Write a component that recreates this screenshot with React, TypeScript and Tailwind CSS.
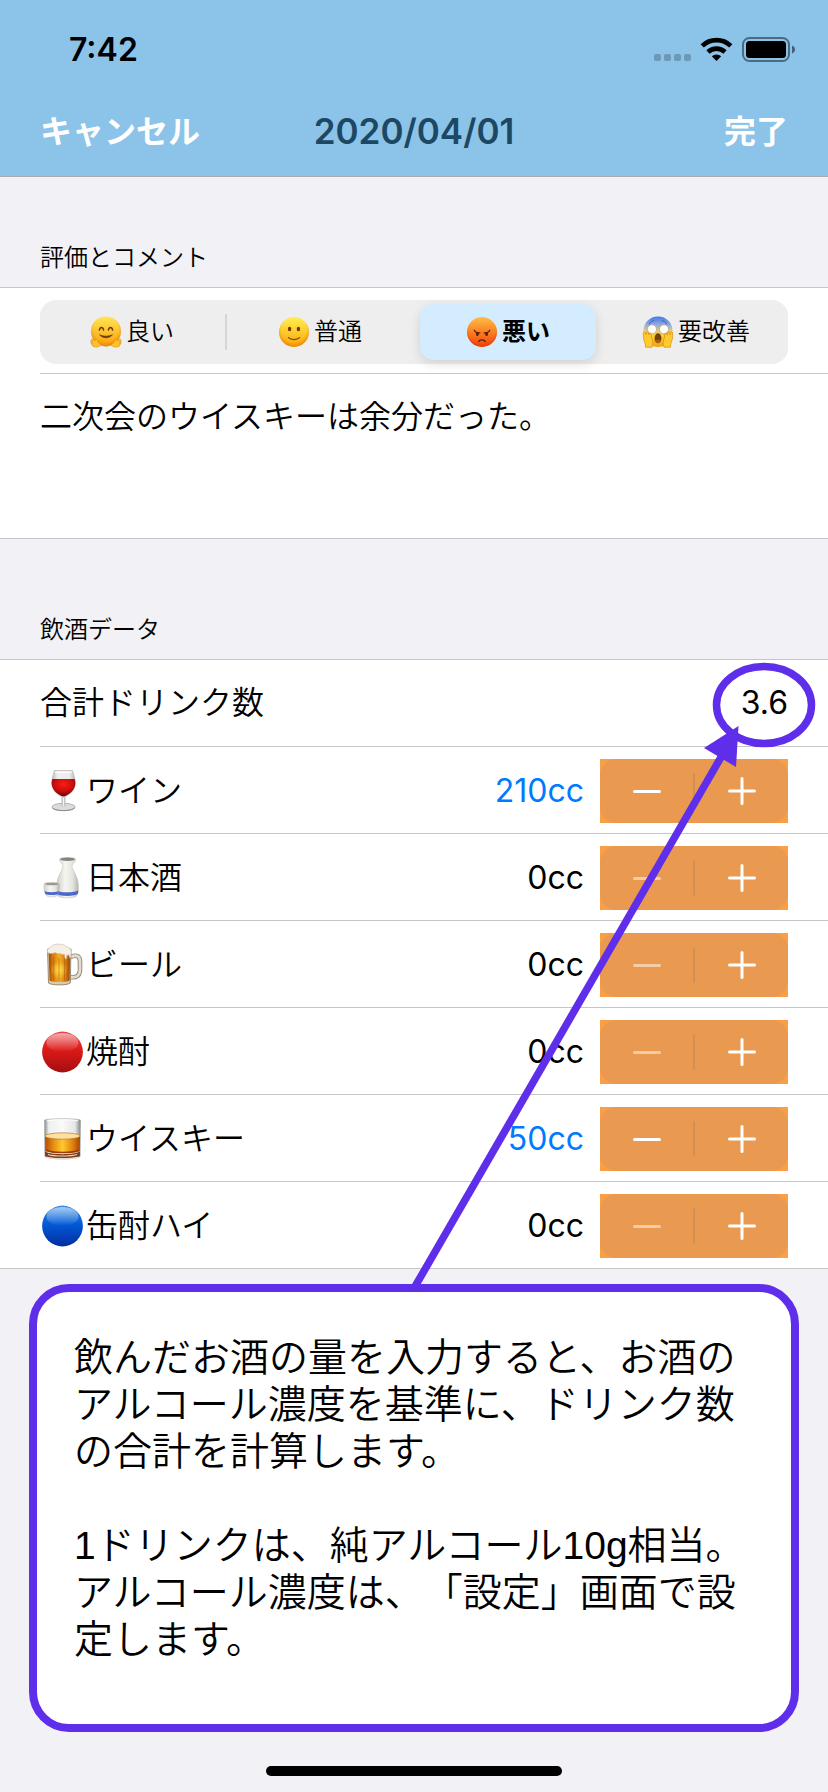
import { useState } from "react";
import type { ReactNode } from "react";

type IconProps = { className?: string };

function FaceGradients({ id, from, to }: { id: string; from: string; to: string }) {
  return (
    <defs>
      <linearGradient id={id} x1="0" y1="0" x2="0" y2="1">
        <stop offset="0" stopColor={from} />
        <stop offset="1" stopColor={to} />
      </linearGradient>
      <radialGradient id={`${id}-edge`} cx="0.5" cy="0.42" r="0.6">
        <stop offset="0.7" stopColor="#e06a00" stopOpacity="0" />
        <stop offset="1" stopColor="#e06a00" stopOpacity="0.6" />
      </radialGradient>
    </defs>
  );
}

function HuggingFace({ className }: IconProps) {
  return (
    <svg viewBox="0 0 32 32" className={className} aria-hidden="true">
      <FaceGradients id="hug" from="#ffe552" to="#fb9f0c" />
      <circle cx="16" cy="15.4" r="15" fill="url(#hug)" />
      <circle cx="16" cy="15.4" r="15" fill="url(#hug-edge)" />
      <path d="M9.4 14c.7-3.200 3.500-3.200 4.200 0M18.400 14c.7-3.200 3.500-3.200 4.200 0" fill="none" stroke="#6b3a06" strokeWidth="1.500" strokeLinecap="round" />
      <path d="M9.600 18.800c3.200 3.900 9.600 3.900 12.800 0-3.600 1.900-9.200 1.900-12.800 0z" fill="#6b3a06" stroke="#6b3a06" strokeWidth="0.700" strokeLinejoin="round" />
      <g fill="#ffc42e" stroke="#e58a0a" strokeWidth="0.600" strokeLinejoin="round">
        <path d="M10.200 29.600c-1.400 2-5.600 1.700-7.200.8-.9-.5-.5-1.400.4-1.200-1.400-.4-2.600-1-2.400-1.800.2-.6 1-.4 1.800-.1C1.600 26.700.3 26 .5 25.200c.2-.7 1.200-.3 2.200.2-.9-.8-1.600-1.600-1.200-2.200.5-.6 1.700.4 3.400 1.800.4-.9.6-2 1.500-1.800 1 .3.700 1.800 1.500 3 .8 1 3.200 1.800 2.300 3.400z" />
        <path d="M21.800 29.600c1.400 2 5.600 1.700 7.200.8.900-.5.5-1.400-.4-1.200 1.400-.4 2.600-1 2.400-1.800-.2-.6-1-.4-1.800-.1 1.200-.6 2.500-1.300 2.300-2.100-.2-.7-1.200-.3-2.200.2.900-.8 1.600-1.600 1.200-2.200-.5-.6-1.700.4-3.400 1.800-.4-.9-.6-2-1.500-1.800-1 .3-.7 1.800-1.500 3-.8 1-3.200 1.800-2.300 3.400z" />
      </g>
    </svg>
  );
}

function SmilingFace({ className }: IconProps) {
  return (
    <svg viewBox="0 0 32 32" className={className} aria-hidden="true">
      <FaceGradients id="smile" from="#ffee50" to="#fba50a" />
      <circle cx="16" cy="16" r="15" fill="url(#smile)" />
      <circle cx="16" cy="16" r="15" fill="url(#smile-edge)" />
      <ellipse cx="11.600" cy="13" rx="1.700" ry="2.300" fill="#6b3a06" />
      <ellipse cx="20.400" cy="13" rx="1.700" ry="2.300" fill="#6b3a06" />
      <path d="M10.400 21.600c3 2.600 8.200 2.600 11.200 0" fill="none" stroke="#7a4408" strokeWidth="1.200" strokeLinecap="round" />
    </svg>
  );
}

function PoutingFace({ className }: IconProps) {
  return (
    <svg viewBox="0 0 32 32" className={className} aria-hidden="true">
      <defs>
        <linearGradient id="pout" x1="0" y1="0" x2="0" y2="1">
          <stop offset="0" stopColor="#ffbe48" />
          <stop offset="0.5" stopColor="#fb8022" />
          <stop offset="1" stopColor="#f0420d" />
        </linearGradient>
        <radialGradient id="pout-edge" cx="0.5" cy="0.42" r="0.6">
          <stop offset="0.75" stopColor="#e23b00" stopOpacity="0" />
          <stop offset="1" stopColor="#e23b00" stopOpacity="0.7" />
        </radialGradient>
      </defs>
      <circle cx="16" cy="16" r="15" fill="url(#pout)" />
      <circle cx="16" cy="16" r="15" fill="url(#pout-edge)" />
      <path d="M8.200 14.200c1 1.900 3.500 2.900 5.700 2.600M23.800 14.200c-1 1.900-3.500 2.900-5.700 2.600" fill="none" stroke="#5b1e05" strokeWidth="1.200" strokeLinecap="round" />
      <ellipse cx="11.400" cy="18" rx="1.500" ry="2" fill="#5b1e05" />
      <ellipse cx="20.600" cy="18" rx="1.500" ry="2" fill="#5b1e05" />
      <path d="M12.800 25.400c1.300-2.100 5.100-2.100 6.400 0" fill="none" stroke="#5b1e05" strokeWidth="1.400" strokeLinecap="round" />
    </svg>
  );
}

function ScreamingFace({ className }: IconProps) {
  return (
    <svg viewBox="0 0 32 32" className={className} aria-hidden="true">
      <defs>
        <linearGradient id="scream" x1="0" y1="0" x2="0" y2="1">
          <stop offset="0" stopColor="#3f7af0" />
          <stop offset="0.3" stopColor="#9fb0d8" />
          <stop offset="0.5" stopColor="#f0cf60" />
          <stop offset="0.7" stopColor="#ffc928" />
          <stop offset="1" stopColor="#f3a010" />
        </linearGradient>
      </defs>
      <path d="M16 .6C7.600.6 1.500 6.800 1.500 15c0 6.500 3.500 16 14.500 16s14.500-9.500 14.500-16C30.500 6.800 24.400.6 16 .6z" fill="url(#scream)" />
      <path d="M7.300 8c1-2 2.700-3 4.500-3.200M24.700 8c-1-2-2.700-3-4.500-3.200" fill="none" stroke="#3b5dac" strokeWidth="1" strokeLinecap="round" />
      <circle cx="10" cy="13.300" r="4.500" fill="#fff" stroke="#a99a70" strokeWidth="0.600" />
      <circle cx="22" cy="13.300" r="4.500" fill="#fff" stroke="#a99a70" strokeWidth="0.600" />
      <ellipse cx="16" cy="22.300" rx="3.400" ry="5" fill="#75400c" />
      <path d="M13.500 24.600c1.400-1.600 3.600-1.600 5 0-.6 1.600-1.500 2.600-2.500 2.600s-1.900-1-2.500-2.600z" fill="#a85d18" />
      <g fill="#ffcb2c" stroke="#d68a0c" strokeWidth="0.700" strokeLinejoin="round">
        <path d="M3.600 31.200c.2-3.400-1.700-5.800-2.100-9.400-.3-2.600-.6-5.800.6-6 1-.2 1.500 1.400 2 3 .1-2 .6-3.200 1.500-3.100.9.100 1 1.600 1.200 3.300.4-1.500 1-2.300 1.800-2 .8.300.5 2.500.9 4.300 1.200 2.800 2.200 6 .4 9.900z" />
        <path d="M28.400 31.200c-.2-3.400 1.700-5.800 2.100-9.400.3-2.600.6-5.800-.6-6-1-.2-1.500 1.400-2 3-.1-2-.6-3.200-1.500-3.100-.9.100-1 1.600-1.200 3.300-.4-1.500-1-2.300-1.800-2-.8.300-.5 2.500-.9 4.300-1.200 2.800-2.200 6-.4 9.900z" />
      </g>
    </svg>
  );
}

function WineIcon({ className }: IconProps) {
  return (
    <svg viewBox="0 0 44 44" className={className} aria-hidden="true">
      <defs>
        <linearGradient id="wine-bowl" x1="0" y1="0" x2="1" y2="0">
          <stop offset="0" stopColor="#b8b8b8" />
          <stop offset="0.25" stopColor="#f0f0f0" />
          <stop offset="0.75" stopColor="#ececec" />
          <stop offset="1" stopColor="#b4b4b4" />
        </linearGradient>
        <radialGradient id="wine-red" cx="0.5" cy="0.3" r="0.65">
          <stop offset="0" stopColor="#f51f17" />
          <stop offset="0.6" stopColor="#cf0d0b" />
          <stop offset="1" stopColor="#6d0a0a" />
        </radialGradient>
      </defs>
      <ellipse cx="23.500" cy="38" rx="11.600" ry="3.700" fill="#dcdcdc" stroke="#a2a2a2" strokeWidth="0.800" />
      <path d="M12.500 39c2.500 3.400 19.500 3.400 22 0" fill="none" stroke="#8c8c8c" strokeWidth="1" />
      <path d="M21.600 26h3.800l.4 10.500c.4 1.200-5 1.200-4.600 0z" fill="#c6c6c6" />
      <path d="M23 27h1v10h-1z" fill="#f6f6f6" />
      <path d="M14.500 1.500h18c1.800 5.500 3.200 10.500 2.800 14-.7 6-6.800 11.500-11.800 12.500-5-1-11.100-6.500-11.800-12.500-.4-3.500 1-8.500 2.800-14z" fill="url(#wine-bowl)" stroke="#bdbdbd" strokeWidth="0.800" />
      <path d="M12.400 10h22.200c.6 2 .8 4 .6 5.500-.7 6-6.700 11-11.700 12-5-1-11-6-11.700-12-.2-1.500 0-3.500.6-5.500z" fill="url(#wine-red)" />
      <path d="M15 3.300h17" stroke="#fff" strokeWidth="1" />
    </svg>
  );
}

function SakeIcon({ className }: IconProps) {
  return (
    <svg viewBox="0 0 44 44" className={className} aria-hidden="true">
      <defs>
        <linearGradient id="sake-body" x1="0" y1="0" x2="1" y2="0">
          <stop offset="0" stopColor="#cfcfca" />
          <stop offset="0.4" stopColor="#f5f5f1" />
          <stop offset="0.75" stopColor="#e4e4df" />
          <stop offset="1" stopColor="#b4b4ae" />
        </linearGradient>
      </defs>
      <path d="M19.500 3c0-2 16-2 16 0 .4 2.600-3.800 5-3.500 7.500.4 3.500 5.600 9 6.300 18 .4 5.500-.6 10.500-2.300 12-2.500 1.700-15 1.700-17.500 0-1.700-1.500-2.200-6.500-1.800-12 .7-9 5.900-14.500 6.300-18C23.300 8 19.100 5.600 19.500 3z" fill="url(#sake-body)" stroke="#c2c2bc" strokeWidth="0.600" />
      <ellipse cx="27.500" cy="3.300" rx="7.200" ry="1.700" fill="#85857d" />
      <path d="M16.700 34.500c4 2.500 18 2.500 21.700-.2l-.4 3.500c-3.500 2.700-17 2.700-21 .4z" fill="#4c67cb" />
      <path d="M4 28c0-2.200 15.500-2.200 15.500 0 .3 6-1 10.500-3 12-1.800 1.200-7.700 1.200-9.500 0-2-1.500-3.300-6-3-12z" fill="url(#sake-body)" stroke="#c2c2bc" strokeWidth="0.600" />
      <ellipse cx="11.800" cy="28" rx="6.700" ry="1.300" fill="#9a9a92" />
      <path d="M4.400 35c3 1.600 11.500 1.600 14.700 0l-.8 3c-3 1.400-10 1.400-13 0z" fill="#4c67cb" />
    </svg>
  );
}

function BeerIcon({ className }: IconProps) {
  return (
    <svg viewBox="0 0 44 44" className={className} aria-hidden="true">
      <defs>
        <linearGradient id="beer-fill" x1="0" y1="0" x2="1" y2="0">
          <stop offset="0" stopColor="#a04a04" />
          <stop offset="0.2" stopColor="#d67c0c" />
          <stop offset="0.5" stopColor="#f5b025" />
          <stop offset="0.8" stopColor="#d2780d" />
          <stop offset="1" stopColor="#984504" />
        </linearGradient>
        <radialGradient id="beer-glow" cx="0.5" cy="0.5" r="0.5">
          <stop offset="0" stopColor="#ffdf4a" />
          <stop offset="1" stopColor="#ffdf4a" stopOpacity="0" />
        </radialGradient>
      </defs>
      <path d="M30.500 14c6-2.500 9.500-1.500 9.500 5v7.500c0 6.500-4 8.500-9.500 7.500" fill="none" stroke="#8f8577" strokeWidth="4.600" />
      <path d="M30.500 14c6-2.500 9.500-1.500 9.500 5v7.500c0 6.500-4 8.500-9.500 7.500" fill="none" stroke="#e2dbd0" strokeWidth="2.800" />
      <path d="M7.500 6h23.500l-.7 34c-3 2.500-18.800 2.500-21.800 0z" fill="#d8cbb8" stroke="#8a7558" strokeWidth="0.800" />
      <path d="M8.600 7h21.600l-.6 30.800c-3 1.800-17 1.800-20 0z" fill="url(#beer-fill)" />
      <ellipse cx="19" cy="27" rx="8.500" ry="9" fill="url(#beer-glow)" />
      <path d="M13.800 14v23.500M19 15v23M24.500 14v23.500" stroke="#b05f0a" strokeWidth="0.900" opacity="0.650" />
      <path d="M7.300 9c-.6-2.700 1.200-3.800 3-4.600 2-2.700 5.700-3.900 8.700-3.100 3-.3 5.500.5 7 2.300 3.200.4 5.400 2.600 5.200 5.600l-.5 4.800c-.5 1.300-1.300.8-1.500-.6l-.4-2c-.4 1.200-1.300 1.300-1.900.5l-.3 3.300c-.5 1.200-1.500.8-1.700-.5l-.6-3.700c-1.800 1.300-2.900-.2-4.300-.5-1.900.7-3.300-.3-4.700-1-2.400 1.300-7 1.400-8-.5z" fill="#f5efe6" stroke="#c7b9a8" strokeWidth="0.600" />
    </svg>
  );
}

function WhiskyIcon({ className }: IconProps) {
  return (
    <svg viewBox="0 0 44 44" className={className} aria-hidden="true">
      <defs>
        <linearGradient id="glass" x1="0" y1="0" x2="1" y2="0">
          <stop offset="0" stopColor="#8a8a8a" />
          <stop offset="0.12" stopColor="#efefef" />
          <stop offset="0.5" stopColor="#fafafa" />
          <stop offset="0.85" stopColor="#e6e6e6" />
          <stop offset="1" stopColor="#868686" />
        </linearGradient>
        <linearGradient id="whisky" x1="0" y1="0" x2="1" y2="0">
          <stop offset="0" stopColor="#b64d06" />
          <stop offset="0.25" stopColor="#e88e12" />
          <stop offset="0.5" stopColor="#ffc92f" />
          <stop offset="0.8" stopColor="#df7f0f" />
          <stop offset="1" stopColor="#a54405" />
        </linearGradient>
      </defs>
      <path d="M4.500 3c5-1.700 31-1.700 36 0l-.4 36.500c-5 3.300-30.200 3.300-35.200 0z" fill="url(#glass)" stroke="#a0a0a0" strokeWidth="0.600" />
      <path d="M5 34.500c5 3.500 30 3.500 35 0l-.1 4.500c-5 3.300-29.800 3.300-34.800 0z" fill="#7f3c18" />
      <path d="M8 37.500c6 2 22 2 29 0M7 40.300c6 1.700 24 1.700 31 0" fill="none" stroke="#e4dad0" strokeWidth="1.200" />
      <path d="M5 19.500h35l-.3 14c-5 3.500-29.400 3.500-34.400 0z" fill="url(#whisky)" />
      <path d="M5.600 33c6 3.300 28 3.300 33.800 0" fill="none" stroke="#9c3c06" strokeWidth="1.500" />
      <ellipse cx="22.500" cy="19" rx="17.500" ry="3.200" fill="#fbe0a0" stroke="#b5651a" strokeWidth="0.600" />
      <path d="M7 3.800c6-1.200 25-1.200 31 0" fill="none" stroke="#fff" strokeWidth="1" />
    </svg>
  );
}

function BallIcon({ className, id, stops }: IconProps & { id: string; stops: [string, string, string] }) {
  return (
    <svg viewBox="0 0 44 44" className={className} aria-hidden="true">
      <defs>
        <linearGradient id={id} x1="0" y1="0" x2="0" y2="1">
          <stop offset="0" stopColor={stops[0]} />
          <stop offset="0.45" stopColor={stops[1]} />
          <stop offset="1" stopColor={stops[2]} />
        </linearGradient>
        <linearGradient id={`${id}-shine`} x1="0" y1="0" x2="0" y2="1">
          <stop offset="0" stopColor="#fff" stopOpacity="0.550" />
          <stop offset="1" stopColor="#fff" stopOpacity="0" />
        </linearGradient>
      </defs>
      <circle cx="22.500" cy="22" r="20.400" fill={`url(#${id})`} />
      <ellipse cx="22.500" cy="12.500" rx="16" ry="9.500" fill={`url(#${id}-shine)`} />
    </svg>
  );
}

function StatusIcons() {
  return (
    <svg viewBox="0 0 142 26" className="h-[26px] w-[142px]" role="img" aria-label="Wi-Fi・バッテリー">
      <g fill="#000" fillOpacity="0.220">
        <rect x="0" y="17" width="7" height="7" rx="2" />
        <rect x="10" y="17" width="7" height="7" rx="2" />
        <rect x="20" y="17" width="7" height="7" rx="2" />
        <rect x="30" y="17" width="7" height="7" rx="2" />
      </g>
      <g fill="none" stroke="#000" strokeWidth="4.600">
        <path d="M48.200 8.900a20.500 20.500 0 0 1 28.600 0" />
        <path d="M54 15a12.300 12.300 0 0 1 17 0" />
      </g>
      <path d="M62.500 24l-4.700-4.700a6.800 6.800 0 0 1 9.400 0z" />
      <rect x="89" y="1" width="46" height="23" rx="6.500" fill="none" stroke="#000" strokeOpacity="0.450" strokeWidth="2" />
      <rect x="92" y="4" width="40" height="17" rx="3.500" />
      <path d="M138 8.500c4 1.200 4 6.800 0 8z" fillOpacity="0.500" />
    </svg>
  );
}

const ratings = [
  { label: "良い", Icon: HuggingFace },
  { label: "普通", Icon: SmilingFace },
  { label: "悪い", Icon: PoutingFace },
  { label: "要改善", Icon: ScreamingFace },
];

function RatingControl() {
  const [selected, setSelected] = useState(2);
  return (
    <div role="radiogroup" aria-label="評価" className="flex h-16 rounded-2xl bg-[#eeeeee] p-1">
      {ratings.map(({ label, Icon }, i) => (
        <div key={label} className="contents">
          {i > 0 && (
            <span className="flex w-3 items-center justify-center">
              {i !== selected && i - 1 !== selected && <span className="h-9 w-0.5 rounded-full bg-[#d5d5d6]" />}
            </span>
          )}
          <label
            className={
              i === selected
                ? "relative flex flex-1 cursor-pointer items-center justify-center gap-1 rounded-[14px] bg-[#d4ecff] text-2xl font-bold shadow-[0_4px_12px_rgba(0,0,0,0.12)]"
                : "relative flex flex-1 cursor-pointer items-center justify-center gap-1 text-2xl"
            }
          >
            <input
              type="radio"
              name="rating"
              className="absolute inset-0 size-full cursor-pointer appearance-none"
              checked={i === selected}
              onChange={() => setSelected(i)}
            />
            <Icon className="size-8" />
            {label}
          </label>
        </div>
      ))}
    </div>
  );
}

function Stepper({ label, value, onChange }: { label: string; value: number; onChange: (v: number) => void }) {
  return (
    <div className="h-16 w-[188px] bg-[#fb9f46]">
      <div className="flex h-full items-center rounded-2xl bg-[#e99a50]">
        <button
          type="button"
          aria-label={`${label}を減らす`}
          disabled={value === 0}
          onClick={() => onChange(Math.max(0, value - 10))}
          className="flex h-full flex-1 items-center justify-center text-white disabled:text-white/50"
        >
          <svg viewBox="0 0 28 28" className="size-7" aria-hidden="true">
            <path d="M1.500 14.500h25" stroke="currentColor" strokeWidth="3" strokeLinecap="round" />
          </svg>
        </button>
        <span className="h-9 w-0.5 rounded-full bg-[#cf9157]" />
        <button
          type="button"
          aria-label={`${label}を増やす`}
          onClick={() => onChange(value + 10)}
          className="flex h-full flex-1 items-center justify-center text-white"
        >
          <svg viewBox="0 0 28 28" className="size-7" aria-hidden="true">
            <path d="M1.500 14h25M14 1.500v25" stroke="currentColor" strokeWidth="3" strokeLinecap="round" />
          </svg>
        </button>
      </div>
    </div>
  );
}

function SectionHeader({ children }: { children: ReactNode }) {
  return <h2 className="border-b border-[#c6c6c8] px-10 pb-[11px] text-2xl leading-9">{children}</h2>;
}

const drinks = [
  { name: "ワイン", icon: <WineIcon className="size-11" />, amount: 210 },
  { name: "日本酒", icon: <SakeIcon className="size-11" />, amount: 0 },
  { name: "ビール", icon: <BeerIcon className="size-11" />, amount: 0 },
  { name: "焼酎", icon: <BallIcon id="ball-red" stops={["#e8474a", "#dc1917", "#a30f12"]} className="size-11" />, amount: 0 },
  { name: "ウイスキー", icon: <WhiskyIcon className="size-11" />, amount: 50 },
  { name: "缶酎ハイ", icon: <BallIcon id="ball-blue" stops={["#3a8ee8", "#0259d6", "#022ea2"]} className="size-11" />, amount: 0 },
];

function PointerArrow() {
  return (
    <svg
      viewBox="0 0 424 630"
      className="pointer-events-none absolute top-0 right-0 z-10 h-[630px] w-[424px]"
      aria-hidden="true"
    >
      <ellipse cx="360" cy="45" rx="47.500" ry="38.500" fill="none" stroke="#5e2eea" strokeWidth="7.500" />
      <path d="M9 630L320 92" stroke="#5e2eea" strokeWidth="7.500" />
      <path d="M334.500 66L300 88L332 107z" fill="#5e2eea" />
    </svg>
  );
}

export default function App() {
  const [amounts, setAmounts] = useState(drinks.map((d) => d.amount));

  return (
    <div className="flex min-h-screen flex-col bg-[#f2f1f6] font-['Inter','Noto_Sans_CJK_JP',sans-serif] font-[350] text-black">
      <header className="border-b border-[#a9a9b4] bg-[#8cc3e9]">
        <div className="flex h-[88px] items-center justify-between pt-3 pr-8 pl-[69px]">
          <time className="text-[32px] font-semibold">7:42</time>
          <StatusIcons />
        </div>
        <nav className="grid h-[88px] grid-cols-[1fr_auto_1fr] items-center px-10">
          <button type="button" className="justify-self-start text-[32px] font-bold text-white">キャンセル</button>
          <h1 className="pb-0.5 text-[35px] font-semibold text-[#1d4863]">2020/04/01</h1>
          <button type="button" className="justify-self-end text-[32px] font-bold text-white">完了</button>
        </nav>
      </header>

      <main className="flex flex-1 flex-col">
        <section className="pt-[63px]">
          <SectionHeader>評価とコメント</SectionHeader>
          <div className="border-b border-[#c6c6c8] bg-white pl-10">
            <div className="border-b border-[#c6c6c8] pt-3 pr-10 pb-[9px]">
              <RatingControl />
            </div>
            <textarea
              aria-label="コメント"
              defaultValue="二次会のウイスキーは余分だった。"
              className="block h-[164px] w-full resize-none bg-transparent pt-5 pr-10 text-[32px] leading-[46px] outline-none"
            />
          </div>
        </section>

        <section className="pt-[73px]">
          <SectionHeader>飲酒データ</SectionHeader>
          <div className="relative border-b border-[#c6c6c8] bg-white pl-10">
            <div className="flex h-[86px] items-center justify-between pr-10 text-[32px]">
              <span>合計ドリンク数</span>
              <output className="font-normal">3.6</output>
            </div>
            <ul>
              {drinks.map((drink, i) => (
                <li key={drink.name} className="flex h-[87px] items-center border-t border-[#c6c6c8] pt-0.5 pr-10 text-[32px]">
                  {drink.icon}
                  <span className="ml-0.5 flex-1">{drink.name}</span>
                  <span className={amounts[i] > 0 ? "mr-4 font-normal text-[#007aff]" : "mr-4 font-normal"}>{amounts[i]}cc</span>
                  <Stepper
                    label={drink.name}
                    value={amounts[i]}
                    onChange={(v) => setAmounts(amounts.map((a, j) => (j === i ? v : a)))}
                  />
                </li>
              ))}
            </ul>
            <PointerArrow />
          </div>
        </section>

        <aside className="mx-[29px] mt-[15px] flex min-h-[448px] flex-col gap-[47px] rounded-[40px] border-8 border-[#5e2eea] bg-white px-[37px] pt-[42px] font-['Liberation_Sans','Noto_Sans_CJK_JP',sans-serif] text-[39px] leading-[47px] [text-spacing-trim:space-all]">
          <p>飲んだお酒の量を入力すると、お酒のアルコール濃度を基準に、ドリンク数の合計を計算します。</p>
          <p>1ドリンクは、純アルコール10g相当。アルコール濃度は、「設定」画面で設定します。</p>
        </aside>
      </main>

      <footer className="flex justify-center pt-[34px] pb-4">
        <div className="h-2.5 w-[296px] rounded-full bg-black" />
      </footer>
    </div>
  );
}
